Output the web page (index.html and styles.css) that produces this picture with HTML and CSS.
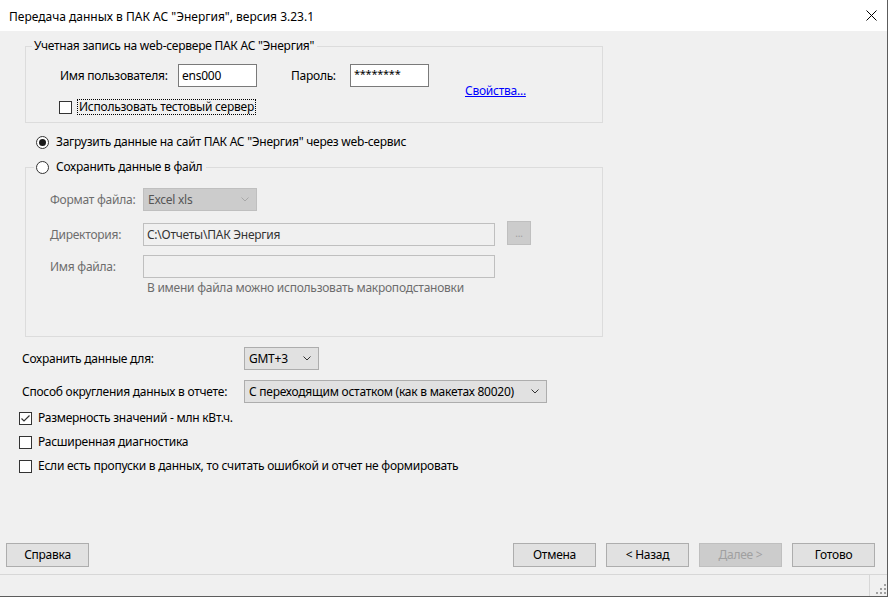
FILE: index.html
```html
<!DOCTYPE html>
<html lang="ru">
<head>
  <meta charset="UTF-8">
  <title>Передача данных в ПАК АС "Энергия"</title>
  <link rel="stylesheet" href="styles.css">
</head>
<body>
<div class="window">
  <div class="titlebar">
    <span class="title">Передача данных в ПАК АС "Энергия", версия 3.23.1</span>
    <svg class="close" width="11" height="11" viewBox="0 0 11 11"><path d="M0.5 0.5L10.5 10.5M10.5 0.5L0.5 10.5"/></svg>
  </div>

  <div class="client">
    <div class="content">

      <!-- учетная запись -->
      <fieldset class="group account">
        <legend>Учетная запись на web-сервере ПАК АС "Энергия"</legend>
        <div class="account-row">
          <span class="user-lbl">Имя пользователя:</span>
          <input class="edit" type="text" value="ens000">
          <span class="pass-lbl">Пароль:</span>
          <input class="edit pass" type="text" value="********">
        </div>
        <div class="account-row2">
          <span class="check test-server"><span class="box"></span><span class="focus">Использовать тестовый сервер</span></span>
          <a class="link" href="#">Свойства...</a>
        </div>
      </fieldset>

      <div class="radio-row upload">
        <span class="radio on"></span>
        <span>Загрузить данные на сайт ПАК АС "Энергия" через web-сервис</span>
      </div>

      <!-- сохранение в файл -->
      <fieldset class="group file">
        <legend><span class="radio"></span><span>Сохранить данные в файл</span></legend>
        <div class="file-row">
          <span class="dis-lbl">Формат файла:</span>
          <div class="combo disabled fmt"><span>Excel xls</span><svg width="8" height="5" viewBox="0 0 8 5"><path d="M0.5 0.5L4 4L7.5 0.5"/></svg></div>
        </div>
        <div class="file-row dir">
          <span class="dis-lbl">Директория:</span>
          <div class="edit disabled wide dir-text">C:\Отчеты\ПАК Энергия</div>
          <div class="btn disabled browse">...</div>
        </div>
        <div class="file-row name">
          <span class="dis-lbl">Имя файла:</span>
          <div class="edit disabled wide"></div>
        </div>
        <div class="hint">В имени файла можно использовать макроподстановки</div>
      </fieldset>

      <div class="opt-row tz">
        <span class="opt-lbl">Сохранить данные для:</span>
        <div class="combo gmt"><span>GMT+3</span><svg width="8" height="5" viewBox="0 0 8 5"><path d="M0.5 0.5L4 4L7.5 0.5"/></svg></div>
      </div>
      <div class="opt-row">
        <span class="opt-lbl">Способ округления данных в отчете:</span>
        <div class="combo round"><span>С переходящим остатком (как в макетах 80020)</span><svg width="8" height="5" viewBox="0 0 8 5"><path d="M0.5 0.5L4 4L7.5 0.5"/></svg></div>
      </div>

      <div class="checks">
        <div class="check"><span class="box"><svg width="11" height="11" viewBox="0 0 11 11"><path d="M1.5 5.5L4 8L9.5 2.5"/></svg></span><span>Размерность значений - млн кВт.ч.</span></div>
        <div class="check"><span class="box"></span><span>Расширенная диагностика</span></div>
        <div class="check"><span class="box"></span><span>Если есть пропуски в данных, то считать ошибкой и отчет не формировать</span></div>
      </div>
    </div>

    <div class="footer">
      <div class="btn">Справка</div>
      <div class="nav">
        <div class="btn">Отмена</div>
        <div class="btn">&lt; Назад</div>
        <div class="btn disabled">Далее &gt;</div>
        <div class="btn">Готово</div>
      </div>
    </div>

    <div class="statusbar">
      <div class="status-cell"></div>
      <svg class="grip" width="10" height="10" viewBox="0 0 10 10">
        <rect x="8" y="0" width="2" height="2"/>
        <rect x="4" y="4" width="2" height="2"/><rect x="8" y="4" width="2" height="2"/>
        <rect x="0" y="8" width="2" height="2"/><rect x="4" y="8" width="2" height="2"/><rect x="8" y="8" width="2" height="2"/>
      </svg>
    </div>
  </div>
</div>
</body>
</html>
```

FILE: styles.css
```css
body {
  margin: 0;
  font-family: "Noto Sans", "Liberation Sans", sans-serif;
  font-size: 12px;
  line-height: 16px;
  color: #000;
  background: #fff;
}

.window {
  width: 888px;
  height: 597px;
  box-sizing: border-box;
  border-right: 1px solid #5c5c5c;
  border-bottom: 1px solid #5c5c5c;
  display: flex;
  flex-direction: column;
}

.titlebar {
  height: 31px;
  flex: none;
  background: #fff;
  display: flex;
  align-items: center;
  justify-content: space-between;
  padding: 0 10px 0 9px;
}

.title {
  padding-top: 2px;
}

.close path {
  stroke: #000;
  stroke-width: 1;
  fill: none;
}

.client {
  flex: 1;
  background: #f0f0f0;
  display: flex;
  flex-direction: column;
  letter-spacing: -0.25px;
}

.content {
  flex: 1;
}

/* group boxes */
.group {
  margin: 0 0 0 25px;
  width: 578px;
  box-sizing: border-box;
  border: 1px solid #dcdcdc;
  padding: 0;
}

.group legend {
  padding: 0 3px 0 2px;
  margin-left: 6px;
  line-height: 16px;
}

.account {
  margin-top: 7px;
  padding: 10px 0 7px 0;
}

.account-row {
  display: flex;
  align-items: center;
  height: 23px;
  padding-left: 34px;
}

.user-lbl {
  width: 118px;
}

.pass-lbl {
  width: 59px;
  margin-left: 34px;
}

.edit {
  width: 79px;
  height: 23px;
  box-sizing: border-box;
  border: 1px solid #7a7a7a;
  background: #fff;
  font: inherit;
  letter-spacing: inherit;
  padding: 0 3px;
  margin: 0;
  outline: none;
}

.pass {
  font-size: 11px;
  padding-bottom: 4px;
}

.account-row2 {
  display: flex;
  align-items: flex-start;
  margin-top: -4px;
  padding-left: 33px;
}

.test-server {
  width: 406px;
  margin-top: 16px;
}

.focus {
  border: 1px dotted #000;
  padding: 0 1px;
  margin-left: -1px;
  line-height: 14px;
}

.link {
  color: #0000ff;
  text-decoration: underline;
}

/* checks and radios */
.check {
  display: flex;
  align-items: center;
  height: 16px;
}

.box {
  width: 13px;
  height: 13px;
  box-sizing: border-box;
  border: 1px solid #333;
  background: #fff;
  margin-right: 6px;
  flex: none;
}

.box svg {
  display: block;
}

.box path {
  stroke: #333;
  stroke-width: 1.2;
  fill: none;
}

.radio {
  width: 13px;
  height: 13px;
  box-sizing: border-box;
  border: 1px solid #333;
  border-radius: 50%;
  background: #fff;
  margin-right: 7px;
  flex: none;
  display: flex;
  align-items: center;
  justify-content: center;
}

.radio.on::after {
  content: "";
  width: 7px;
  height: 7px;
  border-radius: 50%;
  background: #1a1a1a;
}

.radio-row {
  display: flex;
  align-items: center;
  height: 16px;
  margin-left: 36px;
}

.upload {
  margin-top: 11px;
}

/* file group */
.file {
  margin-top: 9px;
  padding: 13px 0 40px 24px;
}

.file legend {
  display: flex;
  align-items: center;
  margin-left: -16px;
  padding: 0 4px 0 2px;
}

.file-row {
  display: flex;
  align-items: center;
  height: 23px;
}

.file-row.dir {
  margin-top: 12px;
}

.file-row.name {
  margin-top: 9px;
}

.dis-lbl {
  width: 93px;
  color: #6d6d6d;
}

.combo {
  height: 23px;
  box-sizing: border-box;
  border: 1px solid #adadad;
  background: #e1e1e1;
  display: flex;
  align-items: center;
  justify-content: space-between;
  padding: 0 7px 0 4px;
}

.combo path {
  stroke: #333;
  stroke-width: 1;
  fill: none;
}

.combo.disabled {
  background: #cccccc;
  border-color: #bfbfbf;
  color: #555;
}

.combo.disabled path {
  stroke: #a8a8a8;
}

.fmt {
  width: 114px;
}

.edit.disabled {
  background: #f0f0f0;
  border-color: #bfbfbf;
  display: flex;
  align-items: center;
}

.wide {
  width: 352px;
}

.dir-text {
  color: #333;
}

.hint {
  margin: 2px 0 0 97px;
  color: #6d6d6d;
}

/* options */
.opt-row {
  display: flex;
  align-items: center;
  height: 23px;
  margin: 10px 0 0 22px;
}

.opt-lbl {
  width: 222px;
}

.gmt {
  width: 75px;
}

.round {
  width: 303px;
}

.checks {
  margin: 7px 0 0 19px;
  display: flex;
  flex-direction: column;
  gap: 8px;
}

/* buttons */
.footer {
  display: flex;
  justify-content: space-between;
  padding: 0 12px 7px 6px;
}

.nav {
  display: flex;
  gap: 10px;
}

.btn {
  width: 83px;
  height: 24px;
  box-sizing: border-box;
  border: 1px solid #adadad;
  background: #e1e1e1;
  display: flex;
  align-items: center;
  justify-content: center;
}

.btn.disabled {
  background: #cccccc;
  border-color: #bfbfbf;
  color: #a0a0a0;
}

.btn.browse {
  width: 24px;
  height: 24px;
  margin-left: 12px;
  margin-top: -3px;
  font-size: 10px;
}

.statusbar {
  height: 22px;
  box-sizing: border-box;
  border-top: 1px solid #d7d7d7;
  display: flex;
  align-items: flex-end;
}

.status-cell {
  width: 870px;
  height: 100%;
  border-right: 1px solid #d7d7d7;
  box-sizing: border-box;
}

.grip {
  margin: 0 0 2px 6px;
  fill: #a0a0a0;
}
```
